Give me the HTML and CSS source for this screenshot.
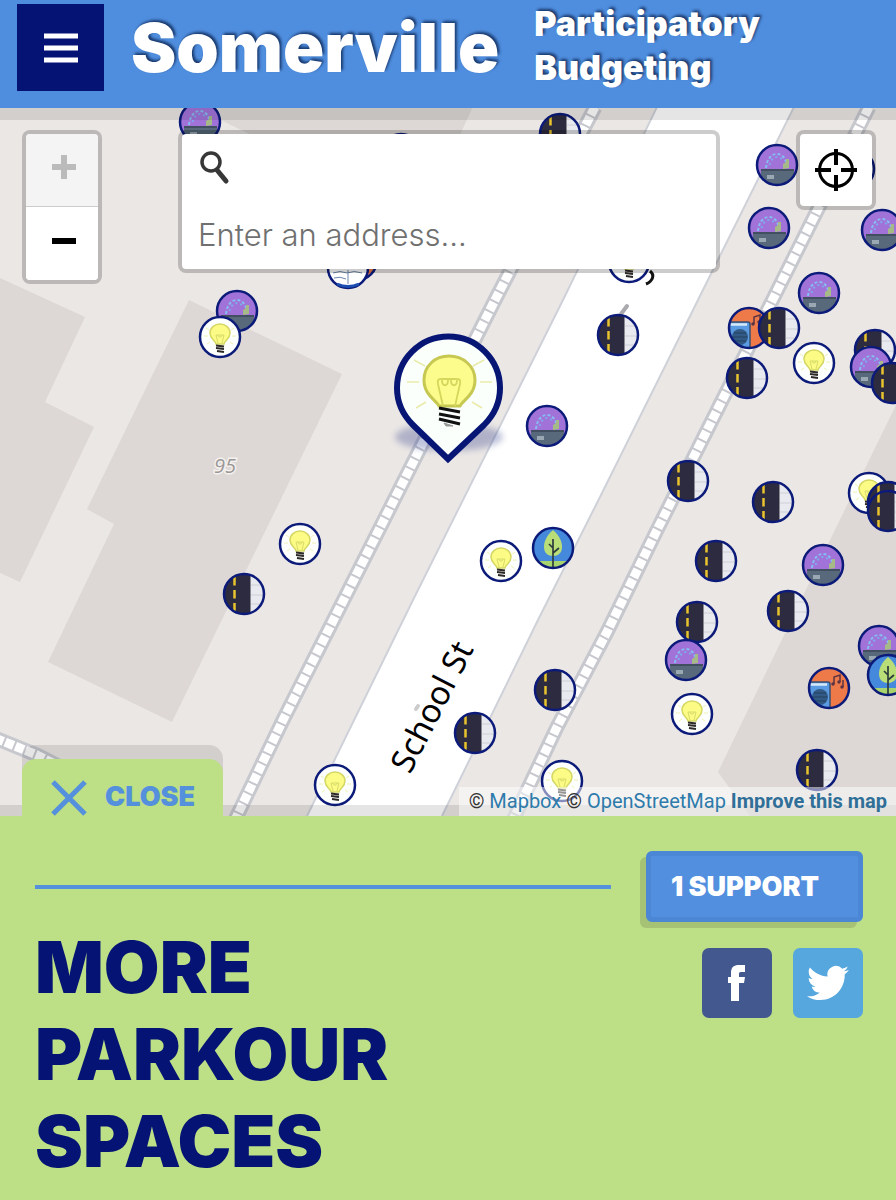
FILE: index.html
```html
<!DOCTYPE html>
<html lang="en">
<head>
<meta charset="utf-8">
<meta name="viewport" content="width=device-width, initial-scale=1">
<title>Somerville Participatory Budgeting</title>
<link rel="stylesheet" href="styles.css">
</head>
<body>
<header class="site-header">
  <button class="menu-button" type="button" aria-label="Menu">
    <svg width="34" height="30" viewBox="0 0 34 30" aria-hidden="true"><path d="M0 3h34M0 15h34M0 27h34" stroke="#fff" stroke-width="5"/></svg>
  </button>
  <a class="brand" href="#">Somerville</a>
  <p class="tagline">Participatory<br>Budgeting</p>
</header>

<main>
<section class="map" aria-label="Map of ideas">
  <svg class="map-canvas" viewBox="0 108 896 708" preserveAspectRatio="xMidYMid slice" role="img" aria-label="School St">
    <defs>
      <clipPath id="disc"><circle r="20"/></clipPath>
      <filter id="soft" x="-20%" y="-60%" width="140%" height="220%"><feGaussianBlur stdDeviation="3"/></filter>
      <symbol id="road" overflow="visible">
        <g clip-path="url(#disc)">
          <rect x="-21" y="-21" width="42" height="42" fill="#e9eaef"/>
          <path d="M6-9h16M6 1h16M6 10h16" stroke="#cfd0d8"/>
          <rect x="-21" y="-21" width="27" height="42" fill="#2d2b40"/>
          <path d="M6.500-21v42" stroke="#8b8a93"/>
          <path d="M-9.500-17v36" stroke="#e8c52f" stroke-width="2.500" stroke-dasharray="8.500 4.500"/>
        </g>
        <circle r="20" fill="none" stroke="#0c1b79" stroke-width="2.500"/>
      </symbol>
      <symbol id="fountain" overflow="visible">
        <g clip-path="url(#disc)">
          <rect x="-21" y="-21" width="42" height="42" fill="#a173d8"/>
          <path d="M-11 3c1-9 5-14 11-14 5 0 8 4 9 8" fill="none" stroke="#86bdf0" stroke-width="2" stroke-dasharray="3 2"/>
          <path d="M-8 3c1-7 4-11 8-11 3 0 5 2 6 4" fill="none" stroke="#7fa9ec" stroke-width="2" stroke-dasharray="2 3" stroke-dashoffset="2"/>
          <path d="M6 4v-5l3-2V-6h3v9z" fill="#a6ba87"/>
          <rect x="-16" y="4" width="33" height="18" fill="#57697a"/>
          <rect x="-16" y="4" width="33" height="2" fill="#414f61"/>
          <rect x="-10" y="10" width="7" height="4" fill="#9aa8b3"/>
        </g>
        <circle r="20" fill="none" stroke="#0c1b79" stroke-width="2.500"/>
      </symbol>
      <symbol id="bulb" overflow="visible">
        <circle r="20" fill="#fcfffd" stroke="#0c1b79" stroke-width="2.500"/>
        <path d="M-16-1h4M12-1h4M-14-9l3 2M14-9l-3 2M-13 7l3-2M13 7l-3-2" stroke="#eef2b4"/>
        <path d="M-4 7c-1-4-6-5-6-11a10 9 0 0 1 20 0c0 6-5 7-6 11z" fill="#fbfb86" stroke="#d5d765" stroke-width="1.500"/>
        <path d="M-2 6l-2-8h8l-2 8M-2-2l1 2h2l1-2" fill="none" stroke="#d9dc6a"/>
        <path d="M-4 8.500l8 1M-4 11l8 1M-3 14l7 1" stroke="#2d2928" stroke-width="2"/>
      </symbol>
      <symbol id="tree" overflow="visible">
        <g clip-path="url(#disc)">
          <rect x="-21" y="-21" width="42" height="42" fill="#4489dc"/>
          <rect x="-21" y="13" width="42" height="9" fill="#a8d46d"/>
          <path d="M0-18c7 6 9 12 9 17 0 6-4 9-9 9s-9-3-9-9c0-5 2-11 9-17z" fill="#bade77"/>
          <path d="M0-9v28M0 5l6-5M0 0l-4-4" fill="none" stroke="#2d3b3e" stroke-width="1.700"/>
        </g>
        <circle r="20" fill="none" stroke="#0c1b79" stroke-width="2.500"/>
      </symbol>
      <symbol id="radio" overflow="visible">
        <g clip-path="url(#disc)">
          <rect x="-21" y="-21" width="42" height="42" fill="#ee7a4a"/>
          <rect x="-22" y="-6" width="23" height="30" rx="2" fill="#5b9be2" stroke="#38506f" stroke-width="1.500"/>
          <path d="M-19-3.500H-2" stroke="#d7eafa" stroke-width="2.500"/>
          <circle cx="-9" cy="9" r="8" fill="#315b86"/>
          <path d="M-15 5h12M-16 9h14M-15 13h12" stroke="#26405f"/>
          <path d="M5-4v-7l6-2v7M14-1v-7" fill="none" stroke="#5b3444" stroke-width="1.500"/>
          <g fill="#5b3444"><circle cx="4" cy="-4" r="1.700"/><circle cx="10" cy="-6" r="1.700"/><circle cx="13" cy="-1" r="1.700"/></g>
        </g>
        <circle r="20" fill="none" stroke="#0c1b79" stroke-width="2.500"/>
      </symbol>
    </defs>

    <rect y="0" width="896" height="900" fill="#ebe7e5"/>
    <g fill="#ddd8d5">
      <path d="M0 278l85 39-40 85 49 25-74 155-20-9z"/>
      <path d="M189 300l153 74-170 348-124-60 66-138-27-15z"/>
      <path d="M180 100l65 32 40 18h168l23-50z"/>
      <path d="M896 405l-66 135-112 232 32 44h146z"/>
    </g>
    <path d="M657 107L563 300 413 600 307 816H442L538 620 600 497 698 300 794 107z" fill="#fff"/>
    <path d="M657 107L563 300 413 600 307 816M442 816L538 620 600 497 698 300 794 107" fill="none" stroke="#cfd1d9" stroke-width="2"/>

    <g fill="none" stroke="#c6c8ce" stroke-width="15">
      <path d="M595 107L495 300 337 613 283 720 235 820"/>
      <path d="M869 107L774 297 657 530 607 632 557 727 513 820"/>
      <path d="M-5 738L37 755 70 772"/>
    </g>
    <g fill="none" stroke="#fff" stroke-width="9" stroke-dasharray="9 2">
      <path d="M595 107L495 300 337 613 283 720 235 820"/>
      <path d="M869 107L774 297 657 530 607 632 557 727 513 820"/>
      <path d="M-5 738L37 755 70 772"/>
    </g>

    <text class="house-number" x="214" y="473">95</text>
    <use href="#road" x="854" y="169"/>
    <use href="#road" x="401" y="154"/>
    <use href="#radio" x="357" y="260"/>
    <g>
      <circle cx="348" cy="268" r="20" fill="#fff" stroke="#0c1b79" stroke-width="2.500"/>
      <path d="M333 273q7-3 14 0 7-3 15 0M334 278q6-2 12 1M348 270v14" fill="none" stroke="#6d87ae"/>
      <path d="M337 284q11 5 22 0" fill="none" stroke="#1c4db0" stroke-width="3"/>
    </g>
    <use href="#bulb" x="629" y="262"/>
    <path d="M650 271c5 4 3 10-4 13" fill="none" stroke="#111" stroke-width="3"/>
    <path d="M621 314l6-8" stroke="#a9a9ae" stroke-width="4" stroke-linecap="round"/>
    <path d="M416 709l2-3" stroke="#ccc" stroke-width="4" stroke-linecap="round"/>
    <text class="street-name" transform="translate(410 775) rotate(-63)">School St</text>

    <use href="#fountain" x="200" y="122"/>
    <use href="#road" x="560" y="134"/>
    <use href="#fountain" x="777" y="165"/>
    <use href="#fountain" x="769" y="228"/>
    <use href="#fountain" x="882" y="230"/>
    <use href="#fountain" x="819" y="293"/>
    <use href="#fountain" x="237" y="311"/>
    <use href="#bulb" x="220" y="337"/>
    <use href="#road" x="618" y="335"/>
    <use href="#radio" x="749" y="328"/>
    <use href="#road" x="779" y="328"/>
    <use href="#bulb" x="814" y="363"/>
    <use href="#road" x="747" y="378"/>
    <use href="#road" x="875" y="350"/>
    <use href="#fountain" x="871" y="367"/>
    <use href="#road" x="892" y="383"/>
    <use href="#fountain" x="547" y="426"/>
    <use href="#road" x="688" y="481"/>
    <use href="#road" x="773" y="502"/>
    <use href="#bulb" x="869" y="493"/>
    <use href="#road" x="888" y="502"/>
    <use href="#road" x="888" y="511"/>
    <use href="#bulb" x="300" y="544"/>
    <use href="#tree" x="553" y="548"/>
    <use href="#bulb" x="501" y="561"/>
    <use href="#road" x="716" y="561"/>
    <use href="#fountain" x="823" y="565"/>
    <use href="#road" x="244" y="594"/>
    <use href="#road" x="788" y="611"/>
    <use href="#road" x="697" y="622"/>
    <use href="#fountain" x="686" y="660"/>
    <use href="#fountain" x="879" y="646"/>
    <use href="#tree" x="888" y="675"/>
    <use href="#radio" x="829" y="688"/>
    <use href="#road" x="555" y="690"/>
    <use href="#bulb" x="692" y="714"/>
    <use href="#road" x="475" y="733"/>
    <use href="#road" x="817" y="770"/>
    <use href="#bulb" x="562" y="781"/>
    <use href="#bulb" x="335" y="785"/>

    <ellipse cx="449" cy="437" rx="54" ry="14" fill="#1b2a80" opacity=".28" filter="url(#soft)"/>
    <path d="M448 459L413 425C403 415 397 402 397 388a51 51 0 0 1 103 0c0 14-6 27-16 37z" fill="#fafffc" stroke="#071575" stroke-width="6"/>
    <path d="M407 382h12M480 382h12M414 360l11 6M484 360l-11 6M416 408l10-6M482 408l-10-6" stroke="#e9ebaa" stroke-width="1.500"/>
    <path d="M439 406c-3-6-15-11-15-26 0-14 11-24 25-24s26 10 26 24c0 15-12 20-15 26z" fill="#fcfc8c" stroke="#c7c852" stroke-width="3"/>
    <path d="M443 406l-5-22c-1-6 2-5 5-5h12c3 0 6-1 5 5l-5 22M442 380c0 7 6 7 6 0M451 380c0 7 6 7 6 0" fill="none" stroke="#d5d65c" stroke-width="1.800"/>
    <path d="M439 408l21 4M439 414l21 4M439 419l21 5" stroke="#111" stroke-width="3"/>
    <path d="M444 423l9 3h-7z" fill="#999" stroke="#999"/>
  </svg>

  <div class="map-controls">
    <div class="zoom-control">
      <button class="zoom-button" type="button" aria-label="Zoom in" disabled>
        <svg width="24" height="24" viewBox="0 0 24 24" aria-hidden="true"><path d="M0 12h24M12 0v24" stroke="currentColor" stroke-width="6"/></svg>
      </button>
      <button class="zoom-button" type="button" aria-label="Zoom out">
        <svg width="24" height="24" viewBox="0 0 24 24" aria-hidden="true"><path d="M0 12h24" stroke="currentColor" stroke-width="6"/></svg>
      </button>
    </div>
    <form class="search">
      <label class="search-label" for="address" aria-label="Address">
        <svg width="30" height="34" viewBox="0 0 30 34" aria-hidden="true"><g fill="none" stroke="#373737"><circle cx="11" cy="11" r="9" stroke-width="3.500"/><path d="M17 19l9 11" stroke-width="5" stroke-linecap="round"/></g></svg>
      </label>
      <input class="search-input" id="address" type="text" placeholder="Enter an address...">
    </form>
    <button class="locate-button" type="button" aria-label="Find my location">
      <svg width="42" height="42" viewBox="0 0 42 42" aria-hidden="true"><circle cx="21" cy="21" r="16.500" fill="none" stroke="#000" stroke-width="3"/><path d="M21 0v16M21 26v16M0 21h16M26 21h16" stroke="#000" stroke-width="4"/></svg>
    </button>
  </div>
  <p class="attribution">© <a href="#">Mapbox</a> © <a href="#">OpenStreetMap</a> <a class="improve" href="#">Improve this map</a></p>
</section>

<article class="idea">
  <button class="close-tab" type="button">
    <svg width="36" height="36" viewBox="0 0 36 36" aria-hidden="true"><path d="M2 2l32 32M34 2L2 34" stroke="currentColor" stroke-width="5"/></svg>
    <span>CLOSE</span>
  </button>
  <hr class="rule">
  <button class="support-button" type="button">1 SUPPORT</button>
  <h1 class="idea-title">MORE PARKOUR SPACES</h1>
  <nav class="share" aria-label="Share">
    <a class="share-link facebook" href="#" aria-label="Facebook">
      <svg width="18" height="38" viewBox="0 0 18 38" aria-hidden="true"><path d="M3 37V19H0v-6h3V9c0-6 3-8 8-8h6v7h-4c-2 0-2 1-2 2v3h6l-1 6h-5v18z" fill="#fff"/></svg>
    </a>
    <a class="share-link twitter" href="#" aria-label="Twitter">
      <svg width="42" height="42" viewBox="0 0 24 24" aria-hidden="true"><path fill="#fff" d="M23.950 4.570a10 10 0 0 1-2.820.770 4.960 4.960 0 0 0 2.160-2.720c-.950.550-2 .950-3.120 1.190a4.920 4.920 0 0 0-8.380 4.480C7.690 8.090 4.070 6.130 1.640 3.160a4.820 4.820 0 0 0-.670 2.480c0 1.710.870 3.210 2.190 4.100a4.900 4.900 0 0 1-2.230-.620v.060a4.920 4.920 0 0 0 3.950 4.830 5 5 0 0 1-2.210.080 4.940 4.940 0 0 0 4.600 3.420A9.870 9.870 0 0 1 0 19.540a14 14 0 0 0 7.550 2.210c9.050 0 14-7.500 14-13.980l-.020-.630a9.940 9.940 0 0 0 2.420-2.570z"/></svg>
    </a>
  </nav>
</article>
</main>
</body>
</html>
```

FILE: styles.css
```css
* { box-sizing: border-box; }

body {
  margin: 0;
  min-height: 100vh;
  background: #bddf86;
  font-family: Inter, "Liberation Sans", sans-serif;
}

button {
  font: inherit;
  border: 0;
  padding: 0;
  cursor: pointer;
}

.site-header {
  position: relative;
  z-index: 2;
  display: flex;
  align-items: flex-start;
  padding: 4px 17px 17px;
  background: #4f8edf;
  box-shadow: 0 12px 0 rgba(0, 0, 0, .1);
}

.menu-button {
  display: flex;
  align-items: center;
  justify-content: center;
  flex: none;
  width: 87px;
  height: 87px;
  background: #041374;
}

.brand,
.tagline {
  color: #fff;
  font-weight: 900;
  text-shadow: 2px -2px 3px rgba(0, 20, 60, .7);
}

.brand {
  margin-left: 27px;
  font-size: 68px;
  line-height: 86px;
  text-decoration: none;
}

.tagline {
  margin: -2px 0 0 35px;
  font-size: 34px;
  line-height: 44px;
}

.map {
  position: relative;
  height: 59vh;
  min-height: 420px;
  overflow: hidden;
}

.map-canvas {
  display: block;
  width: 100%;
  height: 100%;
}

.house-number {
  font: italic 20px "Open Sans", sans-serif;
  fill: #9b9796;
  stroke: #f4f1ef;
  stroke-width: 3px;
  paint-order: stroke;
}

.street-name {
  font: 33px "Noto Sans", sans-serif;
  fill: #000;
  stroke: #fff;
  stroke-width: 2px;
  paint-order: stroke;
}

.map-controls {
  position: absolute;
  z-index: 3;
  top: 0;
  left: 0;
  right: 0;
  display: flex;
  align-items: flex-start;
  gap: 76px;
  padding: 22px 20px 0 22px;
}

.zoom-control,
.search,
.locate-button {
  border: 4px solid rgba(0, 0, 0, .2);
  border-radius: 8px;
  background: #fff;
  background-clip: padding-box;
}

.zoom-control {
  flex: none;
  width: 80px;
}

.zoom-button {
  display: flex;
  align-items: center;
  justify-content: center;
  width: 100%;
  height: 73px;
  padding: 0 0 6px 4px;
  background: #fff;
  color: #000;
  border-radius: 0 0 4px 4px;
}

.zoom-button:disabled {
  background: #f4f4f4;
  color: #bbb;
  border-bottom: 1px solid #ccc;
  border-radius: 4px 4px 0 0;
}

.search {
  flex: 1;
  min-width: 0;
  padding: 17px 16px 6px;
}

.search-label {
  display: block;
  height: 56px;
  padding-left: 2px;
}

.search-input {
  display: block;
  width: 100%;
  height: 56px;
  padding: 0;
  border: 0;
  outline: 0;
  background: transparent;
  color: #333;
  font: 300 31px/56px Inter, "Liberation Sans", sans-serif;
}

.search-input::placeholder { color: #707070; opacity: 1; }

.locate-button {
  display: flex;
  align-items: center;
  justify-content: center;
  flex: none;
  width: 80px;
  height: 80px;
}

.attribution {
  position: absolute;
  z-index: 2;
  right: 0;
  bottom: 0;
  margin: 0;
  padding: 0 9px 0 10px;
  background: rgba(255, 255, 255, .5);
  color: #333;
  font: 20px/29px Roboto, sans-serif;
}

.attribution a {
  color: #2d7bab;
  text-decoration: none;
}

.attribution .improve {
  color: #2f6f98;
  font-weight: 700;
}

.idea {
  position: relative;
  z-index: 1;
  display: grid;
  grid-template-columns: minmax(0, 1fr) 217px;
  column-gap: 35px;
  padding: 35px 33px 24px 35px;
  background: #bddf86;
  box-shadow: 0 -11px 0 rgba(0, 0, 0, .1);
}

.close-tab {
  position: absolute;
  left: 22px;
  bottom: 100%;
  display: flex;
  align-items: flex-end;
  gap: 18px;
  height: 57px;
  padding: 0 28px 0 29px;
  border-radius: 14px 14px 0 0;
  background: #bddf86;
  box-shadow: 0 -14px 0 rgba(0, 0, 0, .1);
  color: #5490dc;
  font-size: 27px;
  font-weight: 900;
  line-height: 38px;
}

.rule {
  align-self: center;
  width: 100%;
  height: 4px;
  margin: 0;
  border: 0;
  background: #5490dc;
}

.support-button {
  height: 71px;
  padding: 0 20px;
  border: 5px solid #4c87d6;
  border-radius: 6px;
  background: #528fdf;
  box-shadow: -6px 6px 0 rgba(0, 0, 0, .12);
  color: #fff;
  font-size: 27px;
  font-weight: 900;
  text-align: left;
}

.idea-title {
  margin: 0;
  padding-top: 1px;
  color: #041374;
  font-size: 72px;
  font-weight: 900;
  line-height: 87px;
}

.share {
  display: flex;
  justify-content: flex-end;
  gap: 21px;
  padding-top: 26px;
}

.share-link {
  display: flex;
  align-items: center;
  justify-content: center;
  width: 70px;
  height: 70px;
  border-radius: 7px;
}

.facebook { background: #43588f; }
.twitter { background: #55a7dd; }
```
